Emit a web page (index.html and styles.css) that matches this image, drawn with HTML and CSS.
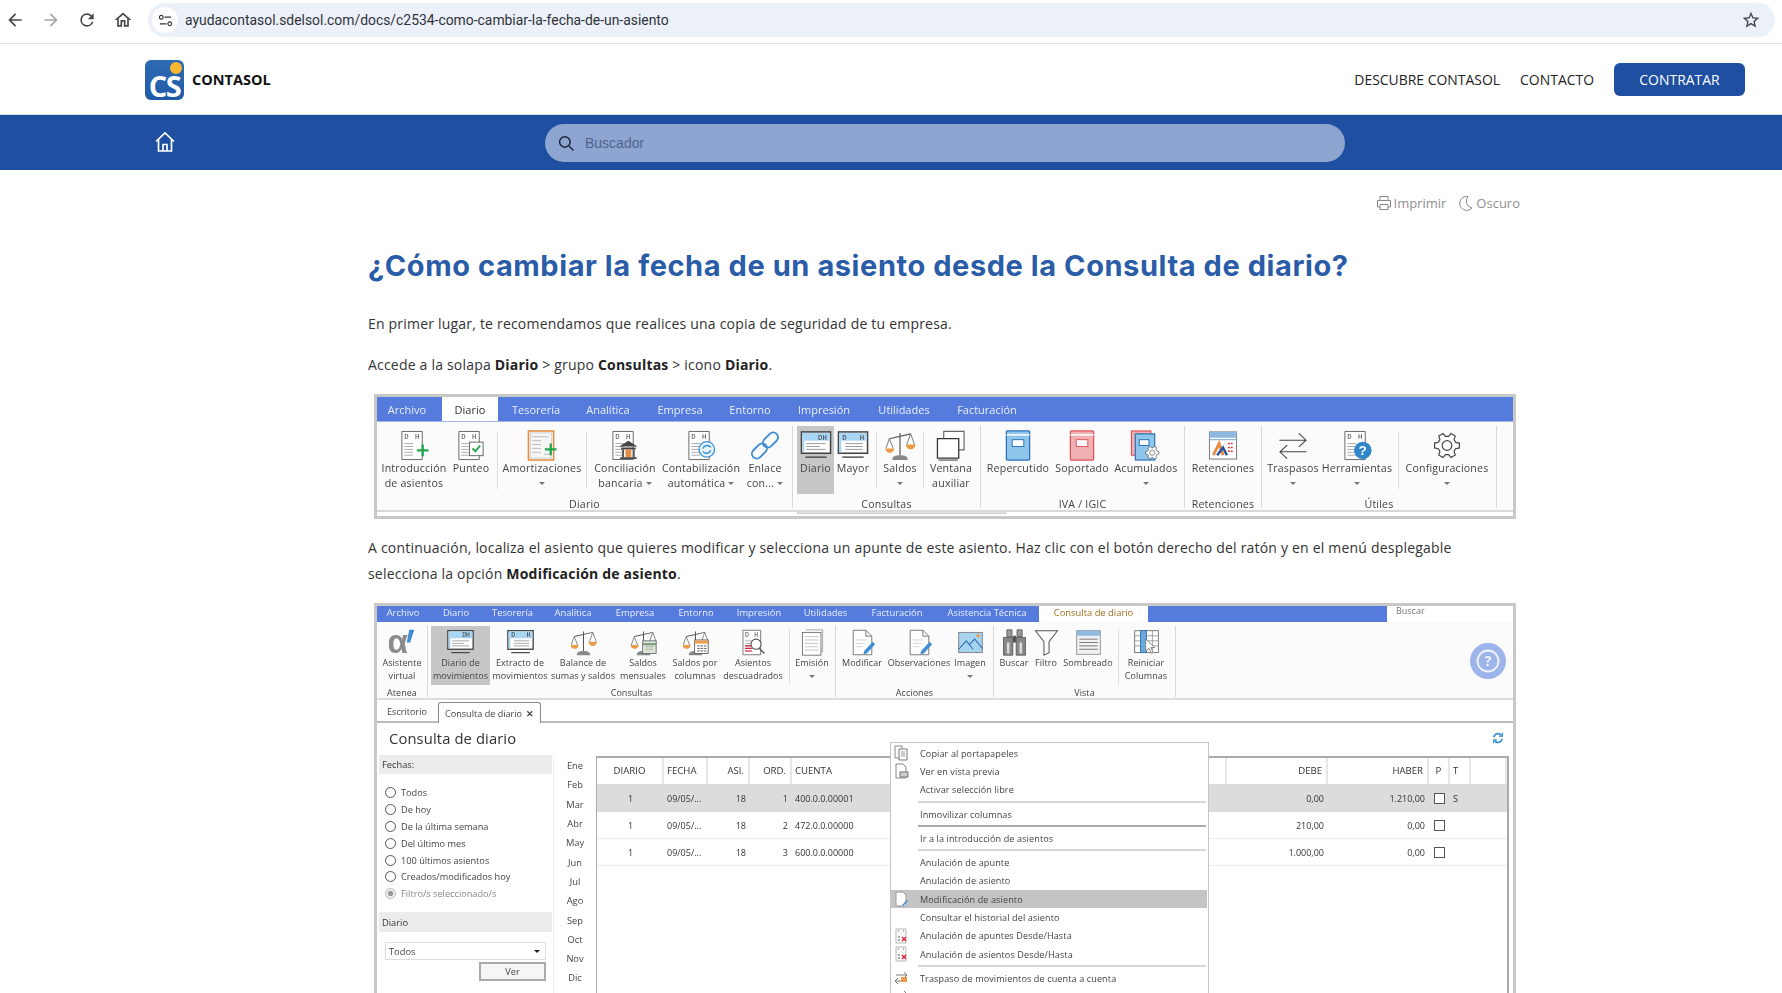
FILE: index.html
```html
<!DOCTYPE html>
<html lang="es">
<head>
<meta charset="utf-8">
<title>¿Cómo cambiar la fecha de un asiento?</title>
<link rel="stylesheet" href="styles.css">
</head>
<body>
<svg class="defs" aria-hidden="true">
  <symbol id="page-dh" viewBox="0 0 32 32">
    <path d="M3.500 1.500h21v29h-21z" fill="#fff" stroke="#666"/>
    <text x="6" y="9" font-size="7.500" font-family="Liberation Mono" fill="#444">D</text>
    <text x="17" y="9" font-size="7.500" font-family="Liberation Mono" fill="#444">H</text>
    <path d="M6 14h9M6 17h9M6 20h9M6 23h9M6 26h9" stroke="#aaa"/>
  </symbol>
  <symbol id="i-intro" viewBox="0 0 32 32"><use href="#page-dh"/><path d="M19 21h12M25 15v12" stroke="#20a84c" stroke-width="2.400"/></symbol>
  <symbol id="i-punteo" viewBox="0 0 32 32"><use href="#page-dh"/><rect x="14.500" y="12.500" width="14" height="14" fill="#fff" stroke="#666"/><path d="M17.500 19l3 3 5-6" fill="none" stroke="#20a84c" stroke-width="2"/></symbol>
  <symbol id="i-amort" viewBox="0 0 32 32"><rect x="2" y="1" width="26" height="30" fill="#fff" stroke="#e58c42" stroke-width="1.600"/><rect x="4" y="3" width="22" height="26" fill="#f6f6f6" stroke="#ccc"/><path d="M6 7h17M6 11h9M6 15h9M6 19h9M6 23h9M18 25h6" stroke="#bbb"/><path d="M19 20h12M25 14v12" stroke="#20a84c" stroke-width="2.400"/></symbol>
  <symbol id="i-bank" viewBox="0 0 32 32"><use href="#page-dh"/><path d="M19.500 11l9.500 6H10z" fill="#444"/><path d="M12 18h15v2H12zM11 28h17v2H11z" fill="#444"/><path d="M13 20h2v8h-2zM24 20h2v8h-2z" fill="#555"/><rect x="16.500" y="20" width="6" height="8" fill="#e58c42"/></symbol>
  <symbol id="i-contab" viewBox="0 0 32 32"><use href="#page-dh"/><circle cx="22" cy="20" r="8" fill="#e5f2fb" stroke="#3b93d6" stroke-width="1.400"/><path d="M18 19a4.500 4.500 0 0 1 8-1M26 21a4.500 4.500 0 0 1-8 1" fill="none" stroke="#3b93d6" stroke-width="1.600"/></symbol>
  <symbol id="i-link" viewBox="0 0 32 32"><g fill="none" stroke="#3f8ed4" stroke-width="2" transform="rotate(-45 16 16)"><rect x="-1" y="11" width="18" height="10" rx="5"/><rect x="15" y="11" width="18" height="10" rx="5"/></g></symbol>
  <symbol id="i-mond" viewBox="0 0 32 32"><rect x="1" y="2" width="30" height="22" fill="#fff" stroke="#444" stroke-width="1.600"/><rect x="2" y="3" width="28" height="8" fill="#a9d6f3"/><rect x="2" y="3" width="2" height="20" fill="#a9d6f3"/><text x="18" y="10" font-size="7.500" font-family="Liberation Mono" fill="#333">DH</text><path d="M6 14h20M6 17h14M6 20h20" stroke="#999"/><path d="M5 28h22" stroke="#444" stroke-width="1.400"/></symbol>
  <symbol id="i-monm" viewBox="0 0 32 32"><rect x="1" y="2" width="30" height="22" fill="#fff" stroke="#444" stroke-width="1.600"/><rect x="2" y="3" width="28" height="8" fill="#a9d6f3"/><rect x="2" y="3" width="2" height="20" fill="#a9d6f3"/><text x="5" y="10" font-size="7.500" font-family="Liberation Mono" fill="#333">D</text><text x="23" y="10" font-size="7.500" font-family="Liberation Mono" fill="#333">H</text><path d="M8 14h18M8 17h18M8 20h18" stroke="#999"/><path d="M5 28h22" stroke="#444" stroke-width="1.400"/></symbol>
  <symbol id="i-scale" viewBox="0 0 32 32"><path d="M16 3v23M5 9L27 4" stroke="#555" stroke-width="1.200" fill="none"/><path d="M5 9L1.500 19M5 9l4 10M27 4l-4 11M27 4l4 11" stroke="#777" fill="none"/><path d="M1 19h9a4.500 4.500 0 0 1-9 0zM22 15h10a5 5 0 0 1-10 0z" fill="#eb9a45"/><path d="M8 31c0-4 3-5 8-5s8 1 8 5z" fill="#888"/></symbol>
  <symbol id="i-scalecal" viewBox="0 0 32 32"><use href="#i-scale"/><rect x="15" y="14" width="16" height="15" fill="#dde7d6" stroke="#667"/><path d="M15 18h16" stroke="#7c9a74" stroke-width="2.500"/><path d="M19 21h9M19 24h9" stroke="#888" stroke-dasharray="2 1"/></symbol>
  <symbol id="i-scaletab" viewBox="0 0 32 32"><use href="#i-scale"/><rect x="15" y="13" width="16" height="16" fill="#fff" stroke="#555"/><path d="M15 15.500h16" stroke="#eb9a45" stroke-width="3.500"/><path d="M18 20h11M18 23h11M18 26h11" stroke="#444" stroke-dasharray="3 1"/></symbol>
  <symbol id="i-win" viewBox="0 0 32 32"><path d="M8.500 1.500h21v19h-21z" fill="#fff" stroke="#666" stroke-width="1.200"/><path d="M2 9h22v20H2z" fill="#fff" stroke="#333" stroke-width="1.300"/><path d="M3 31h20" stroke="#333"/></symbol>
  <symbol id="i-bookb" viewBox="0 0 32 32"><rect x="4" y="1" width="24" height="30" rx="1" fill="#8fc6ec" stroke="#2a6fb5" stroke-width="1.300"/><path d="M4 5h24" stroke="#fff" stroke-width="1.500"/><rect x="10" y="10" width="12" height="7" fill="#fff" stroke="#2a6fb5"/></symbol>
  <symbol id="i-bookr" viewBox="0 0 32 32"><rect x="4" y="1" width="24" height="30" rx="1" fill="#eeb0b0" stroke="#e0505a" stroke-width="1.300"/><path d="M4 5h24" stroke="#fff" stroke-width="1.500"/><rect x="10" y="10" width="12" height="7" fill="#fff" stroke="#e0505a"/></symbol>
  <symbol id="i-gear" viewBox="0 0 32 32"><polygon points="24.900,12.750 28.800,13.500 28.800,18.500 24.900,19.250 23.300,22.100 24.500,25.800 20.200,28.300 17.650,25.400 14.350,25.400 11.800,28.300 7.500,25.800 8.700,22.100 7.100,19.250 3.200,18.500 3.200,13.500 7.100,12.750 8.700,9.900 7.500,6.200 11.800,3.700 14.350,6.600 17.650,6.600 20.200,3.700 24.500,6.200 23.300,9.900" fill="#fff" stroke="#444" stroke-width="1.200"/><circle cx="16" cy="16" r="5" fill="#fff" stroke="#444" stroke-width="1.200"/></symbol>
  <symbol id="i-acum" viewBox="0 0 32 32"><rect x="1" y="1" width="20" height="25" fill="#eeb0b0" stroke="#e0505a" stroke-width="1.200"/><rect x="5" y="4" width="20" height="27" fill="#8fc6ec" stroke="#2a6fb5" stroke-width="1.200"/><rect x="9" y="10" width="10" height="6" fill="#fff" stroke="#2a6fb5"/><svg x="14" y="15" width="17" height="17" viewBox="0 0 32 32"><use href="#i-gear"/></svg></symbol>
  <symbol id="i-ret" viewBox="0 0 32 32"><rect x="2" y="2" width="28" height="28" fill="#fff" stroke="#777"/><rect x="2" y="2" width="28" height="6" fill="#8fb9e0"/><path d="M2 10h28" stroke="#6ea3d4"/><path d="M6 26l6-12 4 12" fill="none" stroke="#e58c42" stroke-width="3"/><path d="M10 26l6-8 4 8" fill="none" stroke="#24509d" stroke-width="2.500"/><path d="M21 14h6M21 18h6M21 22h6" stroke="#d33" stroke-dasharray="2 1" stroke-width="1.500"/></symbol>
  <symbol id="i-arrows" viewBox="0 0 32 32"><path d="M2 10.500h27M22 3.500l7.500 7-7.500 7M30 22.500H3M10 15.500l-7.500 7 7.500 7" fill="none" stroke="#444" stroke-width="1.100"/></symbol>
  <symbol id="i-help" viewBox="0 0 32 32"><use href="#page-dh"/><circle cx="22" cy="21" r="9" fill="#2f86c9"/><text x="22" y="26" font-size="14" font-weight="700" text-anchor="middle" font-family="Liberation Sans" fill="#fff">?</text></symbol>
  <symbol id="i-alpha" viewBox="0 0 32 32"><text x="-2" y="28" font-size="40" font-family="Liberation Sans" font-weight="700" fill="#8c8c8c">α</text><path d="M24 1h6l-5 15h-4z" fill="#3f8ed4"/></symbol>
  <symbol id="i-docsearch" viewBox="0 0 32 32"><use href="#page-dh"/><path d="M6 20h8M6 23h8M6 26h8" stroke="#d8203a" stroke-width="1.300"/><circle cx="19" cy="18" r="6" fill="#fff" stroke="#555" stroke-width="1.300"/><path d="M23 23l6 6" stroke="#555" stroke-width="1.600"/></symbol>
  <symbol id="i-stack" viewBox="0 0 32 32"><path d="M8 1h20v26h-2" fill="none" stroke="#999"/><rect x="4" y="4" width="22" height="27" fill="#fff" stroke="#666"/><path d="M7 9h16M7 13h16M7 17h16M7 21h16M7 25h16" stroke="#bbb"/></symbol>
  <symbol id="i-modif" viewBox="0 0 32 32"><path d="M5 1.500h15l7 7v22H5z" fill="#fff" stroke="#666"/><path d="M20 1.500v7h7" fill="none" stroke="#666"/><path d="M8 13h13M8 17h11M8 21h8" stroke="#ccc"/><path d="M28 15l3 3-10 11-4 1 1-4z" fill="#3f8ed4"/></symbol>
  <symbol id="i-img" viewBox="0 0 32 32"><rect x="2" y="4" width="28" height="24" fill="#a8d3ef" stroke="#777"/><path d="M2 24l9-10 8 10M15 18l6-6 9 11" fill="none" stroke="#2a6fb5" stroke-width="1.200"/><circle cx="25" cy="8" r="2" fill="#eb9a45"/></symbol>
  <symbol id="i-bino" viewBox="0 0 32 32"><path d="M7 1h6v8H7zM19 1h6v8h-6z" fill="#999" stroke="#555"/><path d="M3 10h11v21H3zM18 10h11v21H18z" fill="#888" stroke="#555"/><path d="M14 8h4v8h-4z" fill="#555"/><path d="M7 16h3v13H7zM22 16h3v13h-3z" fill="#ddd"/></symbol>
  <symbol id="i-funnel" viewBox="0 0 32 32"><path d="M3 2h26L19 15v13l-6 3V15z" fill="#fff" stroke="#555" stroke-width="1.200"/></symbol>
  <symbol id="i-shade" viewBox="0 0 32 32"><rect x="2" y="2" width="28" height="28" fill="#f2f2f2" stroke="#888"/><rect x="2" y="2" width="28" height="6" fill="#8fb9e0"/><path d="M5 12h22M5 16h22M5 20h22M5 24h22" stroke="#666"/></symbol>
  <symbol id="i-cols" viewBox="0 0 32 32"><rect x="2" y="2" width="28" height="26" fill="#fff" stroke="#666"/><path d="M2 8h28M2 14h28M2 20h28M9 2v26M23 2v26" stroke="#999"/><rect x="9" y="2" width="7" height="26" fill="#6aa9dd" stroke="#2a6fb5"/><path d="M15 12v14l4-3 3 6 2-1-3-6h5z" fill="#fff" stroke="#777"/></symbol>
  <symbol id="m-copy" viewBox="0 0 16 16"><path d="M2 1h7v12H2z" fill="#fff" stroke="#888"/><path d="M6 4h8v11H6z" fill="#fff" stroke="#777"/><path d="M8 7h4M8 9h4M8 11h4" stroke="#999"/></symbol>
  <symbol id="m-prev" viewBox="0 0 16 16"><path d="M3 1h7l3 3v11H3z" fill="#fff" stroke="#888"/><rect x="7" y="9" width="8" height="5" fill="#ccc" stroke="#777"/></symbol>
  <symbol id="m-mod" viewBox="0 0 16 16"><path d="M3 1h7l3 3v11H3z" fill="#fff" stroke="#999"/><path d="M14 9l1 1-5 5-1-1z" fill="#3f8ed4"/></symbol>
  <symbol id="m-x" viewBox="0 0 16 16"><path d="M3 1h10v14H3z" fill="#f6f6f6" stroke="#bbb"/><path d="M5 3h1M10 3h1M5 9h2M5 12h2" stroke="#666"/><path d="M9 9l4 4M13 9l-4 4" stroke="#d8203a" stroke-width="1.400"/></symbol>
  <symbol id="m-tras" viewBox="0 0 16 16"><path d="M3 5h11M11 2l3 3-3 3M13 11H2M5 8l-3 3 3 3" fill="none" stroke="#777"/><rect x="8" y="7" width="6" height="5" fill="#eb9a45"/></symbol>
</svg>

<div class="chrome">
  <svg class="cicon" viewBox="0 0 24 24"><path d="M20 11H7.830l5.590-5.590L12 4l-8 8 8 8 1.410-1.410L7.830 13H20v-2z"/></svg>
  <svg class="cicon dim" viewBox="0 0 24 24"><path d="M4 11h12.170l-5.590-5.590L12 4l8 8-8 8-1.410-1.410L16.170 13H4v-2z"/></svg>
  <svg class="cicon" viewBox="0 0 24 24"><path d="M17.650 6.350A7.960 7.960 0 0 0 12 4a8 8 0 1 0 7.750 10h-2.080A6 6 0 1 1 12 6c1.660 0 3.140.69 4.220 1.780L13 11h7V4l-2.350 2.350z"/></svg>
  <svg class="cicon" viewBox="0 0 24 24"><path d="M12 5.690l5 4.500V18h-2v-6H9v6H7v-7.810l5-4.500M12 3L2 12h3v8h6v-6h2v6h6v-8h3L12 3z"/></svg>
  <div class="urlbar">
    <span class="siteinfo"><svg viewBox="0 0 16 16"><path d="M7 4.500h7M2 11.500h7" stroke="#333" stroke-width="1.300"/><circle cx="3.500" cy="4.500" r="2" fill="none" stroke="#333" stroke-width="1.200"/><circle cx="12.500" cy="11.500" r="2" fill="none" stroke="#333" stroke-width="1.200"/></svg></span>
    <span class="url">ayudacontasol.sdelsol.com/docs/c2534-como-cambiar-la-fecha-de-un-asiento</span>
    <svg class="star" viewBox="0 0 24 24"><path d="M22 9.240l-7.190-.62L12 2 9.190 8.630 2 9.240l5.460 4.730L5.820 21 12 17.270 18.180 21l-1.630-7.030L22 9.240zM12 15.400l-3.760 2.270 1-4.280-3.320-2.880 4.380-.38L12 6.100l1.710 4.040 4.380.38-3.320 2.880 1 4.280L12 15.400z"/></svg>
  </div>
</div>

<header class="site-head">
  <div class="brand">
    <span class="logo"><span class="logo-dot"></span><span class="logo-cs">CS</span></span>
    <span class="brand-name">CONTASOL</span>
  </div>
  <nav class="nav">
    <a>DESCUBRE CONTASOL</a>
    <a>CONTACTO</a>
    <a class="btn">CONTRATAR</a>
  </nav>
</header>

<div class="band">
  <svg class="home" viewBox="0 0 24 24" fill="none" stroke="#fff" stroke-width="1.700"><path d="M3 11.500L12 3l9 8.500M5.500 9.500V21h13V9.500M10 21v-6.500h4V21"/></svg>
  <div class="search">
    <svg viewBox="0 0 24 24" fill="none" stroke="#1a2338" stroke-width="2"><circle cx="10.500" cy="10.500" r="7"/><path d="M16 16l6 6"/></svg>
    <span>Buscador</span>
  </div>
</div>

<main class="article">
  <div class="tools">
    <span class="tool"><svg viewBox="0 0 16 16" fill="none" stroke="#888"><path d="M4 5V1.500h8V5M4 12H1.500V5.500h13V12H12M4 9.500h8v5H4z"/></svg>Imprimir</span>
    <span class="tool"><svg viewBox="0 0 16 16" fill="none" stroke="#888"><path d="M10 1.500a7 7 0 1 0 4 11.500A7 7 0 0 1 10 1.500z"/></svg>Oscuro</span>
  </div>
  <h1>¿Cómo cambiar la fecha de un asiento desde la Consulta de diario?</h1>
  <p class="p1">En primer lugar, te recomendamos que realices una copia de seguridad de tu empresa.</p>
  <p class="p2">Accede a la solapa <b>Diario</b> &gt; grupo <b>Consultas</b> &gt; icono <b>Diario</b>.</p>

  <div class="shot shot-a">
    <div class="tabs tabs-a">
      <span class="tab w65">Archivo</span><span class="tab on w56">Diario</span><span class="tab w76">Tesorería</span><span class="tab w68">Analítica</span><span class="tab w76">Empresa</span><span class="tab w64">Entorno</span><span class="tab w84">Impresión</span><span class="tab w76">Utilidades</span><span class="tab w90">Facturación</span>
    </div>
    <div class="ribbon ribbon-a">
      <div class="group">
        <div class="items">
          <div class="item w68"><svg class="ic"><use href="#i-intro"/></svg><span>Introducción<br>de asientos</span></div>
          <div class="item w46"><svg class="ic"><use href="#i-punteo"/></svg><span>Punteo</span></div>
          <i class="isep s3"></i>
          <div class="item w88"><svg class="ic"><use href="#i-amort"/></svg><span>Amortizaciones<br><i class="caret"></i></span></div>
          <i class="isep"></i>
          <div class="item w76"><svg class="ic"><use href="#i-bank"/></svg><span>Conciliación<br>bancaria <i class="caret"></i></span></div>
          <div class="item w76"><svg class="ic"><use href="#i-contab"/></svg><span>Contabilización<br>automática <i class="caret"></i></span></div>
          <div class="item w52"><svg class="ic"><use href="#i-link"/></svg><span>Enlace<br>con... <i class="caret"></i></span></div>
        </div>
        <div class="glabel">Diario</div>
      </div>
      <div class="group">
        <div class="items pl4">
          <div class="item w37 sel"><svg class="ic"><use href="#i-mond"/></svg><span>Diario</span></div>
          <div class="item w38"><svg class="ic"><use href="#i-monm"/></svg><span>Mayor</span></div>
          <i class="isep s4"></i>
          <div class="item w46"><svg class="ic"><use href="#i-scale"/></svg><span>Saldos<br><i class="caret"></i></span></div>
          <i class="isep"></i>
          <div class="item w52 ml1"><svg class="ic"><use href="#i-win"/></svg><span>Ventana<br>auxiliar</span></div>
          <i class="spacer"></i>
        </div>
        <div class="glabel">Consultas</div>
      </div>
      <div class="group">
        <div class="items pl5">
          <div class="item w64"><svg class="ic"><use href="#i-bookb"/></svg><span>Repercutido</span></div>
          <div class="item w64"><svg class="ic"><use href="#i-bookr"/></svg><span>Soportado</span></div>
          <div class="item w64"><svg class="ic"><use href="#i-acum"/></svg><span>Acumulados<br><i class="caret"></i></span></div>
          <i class="spacer"></i>
        </div>
        <div class="glabel">IVA / IGIC</div>
      </div>
      <div class="group">
        <div class="items">
          <div class="item w76"><svg class="ic"><use href="#i-ret"/></svg><span>Retenciones</span></div>
        </div>
        <div class="glabel">Retenciones</div>
      </div>
      <div class="group">
        <div class="items">
          <div class="item w62"><svg class="ic"><use href="#i-arrows"/></svg><span>Traspasos<br><i class="caret"></i></span></div>
          <div class="item w66"><svg class="ic"><use href="#i-help"/></svg><span>Herramientas<br><i class="caret"></i></span></div>
          <i class="isep s8"></i>
          <div class="item w96"><svg class="ic"><use href="#i-gear"/></svg><span>Configuraciones<br><i class="caret"></i></span></div>
        </div>
        <div class="glabel">Útiles</div>
      </div>
    </div>
    <div class="ribbon-foot"><span class="foot-piece"></span></div>
  </div>

  <p class="p3">A continuación, localiza el asiento que quieres modificar y selecciona un apunte de este asiento. Haz clic con el botón derecho del ratón y en el menú desplegable selecciona la opción <b>Modificación de asiento</b>.</p>

  <div class="shot shot-b">
    <div class="tabs tabs-b">
      <span class="tab w52">Archivo</span><span class="tab w54">Diario</span><span class="tab w59">Tesorería</span><span class="tab w62">Analítica</span><span class="tab w62">Empresa</span><span class="tab w60">Entorno</span><span class="tab w66">Impresión</span><span class="tab w67">Utilidades</span><span class="tab w76">Facturación</span><span class="tab w104">Asistencia Técnica</span><span class="tab on w109">Consulta de diario</span>
      <span class="tabfill"></span>
      <span class="qsearch">Buscar</span>
    </div>
    <div class="ribbon ribbon-b">
      <div class="group">
        <div class="items">
          <div class="item w50"><svg class="ic"><use href="#i-alpha"/></svg><span>Asistente<br>virtual</span></div>
        </div>
        <div class="glabel">Atenea</div>
      </div>
      <div class="group">
        <div class="items pl3">
          <div class="item w59 sel"><svg class="ic"><use href="#i-mond"/></svg><span>Diario de<br>movimientos</span></div>
          <div class="item w60"><svg class="ic"><use href="#i-monm"/></svg><span>Extracto de<br>movimientos</span></div>
          <div class="item w66"><svg class="ic"><use href="#i-scale"/></svg><span>Balance de<br>sumas y saldos</span></div>
          <div class="item w54"><svg class="ic"><use href="#i-scalecal"/></svg><span>Saldos<br>mensuales</span></div>
          <div class="item w50"><svg class="ic"><use href="#i-scaletab"/></svg><span>Saldos por<br>columnas</span></div>
          <div class="item w66"><svg class="ic"><use href="#i-docsearch"/></svg><span>Asientos<br>descuadrados</span></div>
          <i class="isep s3"></i>
          <div class="item w44"><svg class="ic"><use href="#i-stack"/></svg><span>Emisión<br><i class="caret"></i></span></div>
        </div>
        <div class="glabel">Consultas</div>
      </div>
      <div class="group">
        <div class="items">
          <div class="item w52"><svg class="ic"><use href="#i-modif"/></svg><span>Modificar</span></div>
          <div class="item w62"><svg class="ic"><use href="#i-modif"/></svg><span>Observaciones</span></div>
          <div class="item w40"><svg class="ic"><use href="#i-img"/></svg><span>Imagen<br><i class="caret"></i></span></div>
          <i class="spacer"></i>
        </div>
        <div class="glabel">Acciones</div>
      </div>
      <div class="group">
        <div class="items">
          <div class="item w40"><svg class="ic"><use href="#i-bino"/></svg><span>Buscar</span></div>
          <div class="item w24"><svg class="ic"><use href="#i-funnel"/></svg><span>Filtro</span></div>
          <div class="item w60"><svg class="ic"><use href="#i-shade"/></svg><span>Sombreado</span></div>
          <i class="isep"></i>
          <div class="item w54"><svg class="ic"><use href="#i-cols"/></svg><span>Reiniciar<br>Columnas</span></div>
        </div>
        <div class="glabel">Vista</div>
      </div>
      <div class="helpwrap">
        <svg class="helpdot" viewBox="0 0 36 36"><circle cx="18" cy="18" r="18" fill="#9db5ea"/><circle cx="18" cy="18" r="10.500" fill="none" stroke="#f2f5fd" stroke-width="1.800"/><text x="18" y="23" font-size="14" font-weight="700" text-anchor="middle" font-family="Open Sans" fill="#f2f5fd">?</text></svg>
      </div>
    </div>
    <div class="doctabs">
      <span class="doctab">Escritorio</span>
      <span class="doctab active">Consulta de diario <b class="close">✕</b></span>
    </div>
    <div class="titlerow">
      <span class="apptitle">Consulta de diario</span>
      <svg class="refresh" viewBox="0 0 16 16" fill="none" stroke="#2f8fd6" stroke-width="2.200"><path d="M2.500 7a5.500 5.500 0 0 1 10-2.500M13.500 9a5.500 5.500 0 0 1-10 2.500"/><path d="M13.800 1v4.500H9.300M2.200 15v-4.500h4.500" stroke-width="1.500"/></svg>
    </div>
    <div class="workspace">
      <aside class="filters">
        <div class="fband">Fechas:</div>
        <div class="radios">
          <label class="radio"><i></i>Todos</label>
          <label class="radio"><i></i>De hoy</label>
          <label class="radio"><i></i>De la última semana</label>
          <label class="radio"><i></i>Del último mes</label>
          <label class="radio"><i></i>100 últimos asientos</label>
          <label class="radio"><i></i>Creados/modificados hoy</label>
          <label class="radio off"><i></i>Filtro/s seleccionado/s</label>
        </div>
        <div class="fband tall">Diario</div>
        <div class="select"><span>Todos</span><i class="caret dark"></i></div>
        <div class="verwrap"><span class="ver">Ver</span></div>
      </aside>
      <div class="months">
        <span>Ene</span><span>Feb</span><span>Mar</span><span>Abr</span><span>May</span><span>Jun</span><span>Jul</span><span>Ago</span><span>Sep</span><span>Oct</span><span>Nov</span><span>Dic</span>
      </div>
      <div class="grid">
        <div class="row head">
          <span class="c">DIARIO</span><span class="l">FECHA</span><span class="r">ASI.</span><span class="r">ORD.</span><span class="l">CUENTA</span><span class="r">DEBE</span><span class="r">HABER</span><span class="c">P</span><span class="l">T</span><span></span>
        </div>
        <div class="row hl">
          <span class="c">1</span><span class="l">09/05/...</span><span class="r">18</span><span class="r">1</span><span class="l">400.0.0.00001</span><span class="r">0,00</span><span class="r">1.210,00</span><span class="c"><i class="chk"></i></span><span class="l">S</span><span></span>
        </div>
        <div class="row">
          <span class="c">1</span><span class="l">09/05/...</span><span class="r">18</span><span class="r">2</span><span class="l">472.0.0.00000</span><span class="r">210,00</span><span class="r">0,00</span><span class="c"><i class="chk"></i></span><span></span><span></span>
        </div>
        <div class="row">
          <span class="c">1</span><span class="l">09/05/...</span><span class="r">18</span><span class="r">3</span><span class="l">600.0.0.00000</span><span class="r">1.000,00</span><span class="r">0,00</span><span class="c"><i class="chk"></i></span><span></span><span></span>
        </div>
      </div>
    </div>
    <div class="menu">
      <div class="mi"><svg class="mic"><use href="#m-copy"/></svg>Copiar al portapapeles</div>
      <div class="mi"><svg class="mic"><use href="#m-prev"/></svg>Ver en vista previa</div>
      <div class="mi">Activar selección libre</div>
      <div class="msep"></div>
      <div class="mi">Inmovilizar columnas</div>
      <div class="msep dark"></div>
      <div class="mi">Ir a la introducción de asientos</div>
      <div class="msep"></div>
      <div class="mi">Anulación de apunte</div>
      <div class="mi">Anulación de asiento</div>
      <div class="mi hover"><svg class="mic"><use href="#m-mod"/></svg>Modificación de asiento</div>
      <div class="mi">Consultar el historial del asiento</div>
      <div class="mi"><svg class="mic"><use href="#m-x"/></svg>Anulación de apuntes Desde/Hasta</div>
      <div class="mi"><svg class="mic"><use href="#m-x"/></svg>Anulación de asientos Desde/Hasta</div>
      <div class="msep"></div>
      <div class="mi"><svg class="mic"><use href="#m-tras"/></svg>Traspaso de movimientos de cuenta a cuenta</div>
      <div class="mi"><svg class="mic"><use href="#m-tras"/></svg></div>
    </div>
  </div>
</main>
</body>
</html>
```
FILE: styles.css
```css
* { box-sizing: border-box; }
html, body { margin: 0; padding: 0; height: 993px; overflow: hidden; background: #fff; }
body { font-family: "Open Sans", "Liberation Sans", sans-serif; color: #333; }
.defs { display: none; }

/* browser chrome */
.chrome { height: 44px; border-bottom: 1px solid #e3e3e3; display: flex; align-items: center; padding: 0 7px 3px 3px; background: #fff; }
.cicon { width: 20px; height: 20px; fill: #474747; flex: none; margin-right: 14px; margin-left: 2px; }
.cicon.dim { fill: #a5a5a5; }
.urlbar { flex: 1; height: 34px; margin-left: 1px; border-radius: 17px; background: #ebf0f9; display: flex; align-items: center; padding: 0 14px 0 4px; }
.siteinfo { width: 26px; height: 26px; border-radius: 50%; background: #fff; display: flex; align-items: center; justify-content: center; }
.siteinfo svg { width: 15px; height: 15px; }
.url { margin-left: 7px; font: 13.9px "Roboto", "Liberation Sans", sans-serif; color: #30343a; flex: 1; }
.star { width: 20px; height: 20px; fill: #444; }

/* header */
.site-head { height: 71px; border-bottom: 1px solid #ddd; display: flex; align-items: center; justify-content: space-between; padding: 0 37px 0 145px; }
.brand { display: flex; align-items: center; gap: 8px; }
.logo { width: 39px; height: 40px; margin-top: 1px; border-radius: 6px; background: linear-gradient(180deg, #2e6bb3, #1f5aa6); position: relative; display: flex; align-items: flex-end; justify-content: center; }
.logo-dot { position: absolute; top: 2px; right: 2px; width: 12px; height: 12px; border-radius: 50%; background: #f7b733; }
.logo-cs { font: 700 29px/28px "Open Sans", sans-serif; color: #fff; letter-spacing: -1.500px; }
.brand-name { font: 700 14.5px "Open Sans", sans-serif; color: #111; }
.nav { display: flex; align-items: center; gap: 20px; }
.nav a { font-size: 13.95px; color: #222; }
.nav a.btn { width: 131px; height: 33px; border-radius: 6px; background: #1e4fa1; color: #fff; display: flex; align-items: center; justify-content: center; }

/* blue band */
.band { height: 55px; background: #1e4fa1; display: flex; align-items: center; padding-left: 153px; }
.home { width: 24px; height: 24px; flex: none; margin-bottom: 2px; }
.search { margin-left: 368px; width: 800px; height: 38px; border-radius: 19px; background: #8da5d0; display: flex; align-items: center; padding-left: 12px; gap: 10px; }
.search svg { width: 18px; height: 18px; }
.search span { font: 14px "Liberation Sans", sans-serif; color: #4e648e; }

/* article */
.article { width: 1152px; margin-left: 368px; }
.tools { display: flex; justify-content: flex-end; gap: 12px; height: 33px; align-items: center; margin-top: 16px; }
.tool { display: flex; align-items: center; gap: 2px; font-size: 13px; color: #8f8f8f; }
.tool svg { width: 16px; height: 16px; }
h1 { margin: 22px 0 0; height: 50px; font: 700 29px/50px "Inter", "Open Sans", sans-serif; color: #2a5ca8; letter-spacing: .57px; white-space: nowrap; }
p { margin: 0; font-size: 14px; line-height: 26px; color: #333; letter-spacing: .2px; }
.p1 { margin-top: 20px; }
.p2 { margin-top: 15px; }
.p3 { margin-top: 16px; }
p b { color: #222; font-weight: 700; }

/* embedded app screenshots */
.shot { width: 1142px; margin-left: 6px; border: 3px solid #c8c8c8; background: #fff; filter: blur(.35px); font-family: "Open Sans", "Noto Sans", sans-serif; color: #444; position: relative; }
.shot-a { margin-top: 16px; height: 125px; }
.shot-b { margin-top: 16px; height: 420px; }
.tabs { display: flex; background: #557bdc; color: #e8eefc; align-items: stretch; }
.tabs .tab { display: flex; align-items: center; justify-content: center; flex: none; }
.tabs .tab.on { background: #fff; color: #333; }
.tabs-a { height: 25px; font-size: 11px; border-bottom: 1px solid #9fb4ea; }
.tabs-a .tab:first-child { padding-right: 5px; }
.tabs-b { height: 16px; font-size: 9.4px; }
.tabs-b .tab { padding-bottom: 4px; }
.tabs-b .tab.on { color: #a0701f; }
.tabfill { flex: 1; }
.qsearch { width: 126px; background: #fff; color: #777; font-size: 9px; padding-left: 9px; line-height: 10px; }

.ribbon { display: flex; background: #fbfbfb; align-items: flex-start; }
.group { border-right: 1px solid #d8d8d8; flex: none; }
.items { display: flex; align-items: stretch; }
.item { flex: none; display: flex; flex-direction: column; align-items: center; text-align: center; white-space: nowrap; }
.item.sel { background: #c6c6c6; }
.ic { display: block; flex: none; }
.isep { display: block; width: 1px; background: #dcdcdc; flex: none; }
.spacer { flex: 1; }
.caret { display: inline-block; width: 0; height: 0; border: 3px solid transparent; border-top: 3.5px solid #777; border-bottom: 0; vertical-align: middle; }
.caret.dark { border-top-color: #222; }
.glabel { text-align: center; white-space: nowrap; }

.ribbon-a { height: 90px; padding-top: 4px; font-size: 10.6px; border-bottom: 2px solid #d8d8d8; letter-spacing: .2px; }
.ribbon-a .group { height: 82px; }
.ribbon-a .items { height: 68px; }
.ribbon-a .item { padding-top: 4px; line-height: 14.5px; }
.ribbon-a .ic { width: 32px; height: 31px; }
.ribbon-a .isep { margin: 6px 0 5px; }
.ribbon-a .glabel { box-sizing: content-box; height: 14px; padding-top: 3px; line-height: 14px; }
.ribbon-a .group:nth-child(1) { width: 416px; }
.ribbon-a .group:nth-child(2) { width: 188px; }
.ribbon-a .group:nth-child(3) { width: 204px; }
.ribbon-a .group:nth-child(4) { width: 77px; }
.ribbon-a .group:nth-child(5) { width: 235px; }
.ribbon-a .group:nth-child(1) .items { padding-left: 3px; }
.ribbon-foot { height: 5px; }
.foot-piece { display: block; margin-left: 420px; width: 209px; height: 2px; background: #e2e2e2; border: 1px solid #ccc; border-top: 0; }

.ribbon-b { height: 78px; padding-top: 4px; font-size: 9px; letter-spacing: .05px; border-bottom: 2px solid #dcdcdc; position: relative; }
.ribbon-b .group { height: 71px; }
.ribbon-b .items { height: 59px; }
.ribbon-b .item { padding-top: 3px; line-height: 13px; }
.ribbon-b .ic { width: 27px; height: 27px; }
.ribbon-b .isep { margin: 3px 0 0; }
.ribbon-b .glabel { height: 12px; line-height: 16px; }
.ribbon-b .group:nth-child(1) { width: 51px; }
.ribbon-b .group:nth-child(2) { width: 408px; }
.ribbon-b .group:nth-child(3) { width: 158px; }
.ribbon-b .group:nth-child(4) { width: 182px; }
.helpwrap { flex: 1; display: flex; justify-content: flex-end; padding: 17px 7px 0 0; }
.helpdot { width: 36px; height: 36px; }

.pl3 { padding-left: 3px; }
.pl4 { padding-left: 4px; }
.pl5 { padding-left: 5px; }
.ml1 { margin-left: 1px; }
.s3 { margin-left: 3px !important; }
.s4 { margin-left: 4px !important; }
.s8 { margin-left: 8px !important; }
.w24 { width: 24px; } .w37 { width: 37px; } .w38 { width: 38px; } .w40 { width: 40px; } .w44 { width: 44px; }
.w46 { width: 46px; } .w50 { width: 50px; } .w52 { width: 52px; } .w54 { width: 54px; } .w56 { width: 56px; }
.w59 { width: 59px; } .w60 { width: 60px; } .w62 { width: 62px; } .w64 { width: 64px; } .w65 { width: 65px; }
.w66 { width: 66px; } .w67 { width: 67px; } .w68 { width: 68px; } .w76 { width: 76px; } .w84 { width: 84px; }
.w88 { width: 88px; } .w90 { width: 90px; } .w96 { width: 96px; } .w104 { width: 104px; } .w109 { width: 109px; }

.doctabs { height: 23px; display: flex; align-items: flex-end; border-bottom: 2px solid #bbb; font-size: 9.1px; color: #444; }
.doctab { height: 19px; padding: 0 10px; display: flex; align-items: center; }
.doctab:first-child { width: 61px; padding: 0 0 0 10px; }
.doctab.active { width: 103px; height: 21px; margin-bottom: -2px; background: #fff; border: 1px solid #888; border-bottom: 0; border-radius: 3px 3px 0 0; padding: 0 6px; white-space: nowrap; }
.close { font-size: 8.5px; margin-left: 4px; font-weight: 700; }

.titlerow { height: 32px; display: flex; align-items: center; justify-content: space-between; padding: 0 9px 3px 12px; }
.apptitle { font-size: 14.8px; color: #333; letter-spacing: .1px; }
.refresh { width: 12px; height: 12px; }

.workspace { display: flex; padding-left: 2px; font-size: 9.3px; }
.filters { width: 175px; flex: none; height: 240px; border-right: 1px solid #eee; }
.fband { height: 19px; background: #ececec; padding: 1px 0 0 3px; line-height: 18px; color: #333; margin-right: 1px; }
.fband.tall { height: 20px; line-height: 19px; margin-top: 10px; }
.radios { padding: 10px 0 0 6px; }
.radio { display: flex; align-items: center; gap: 5px; height: 16.900px; font-size: 9.2px; color: #444; }
.radio i { width: 11px; height: 11px; border-radius: 50%; border: 1px solid #555; background: #fff; flex: none; }
.radio.off { color: #888; }
.radio.off i { border-color: #bbb; background: radial-gradient(circle, #999 0 2.500px, #eee 3px); }
.select { margin: 10px 0 0 6px; width: 161px; height: 18px; border: 1px solid #ddd; display: flex; align-items: center; justify-content: space-between; padding: 0 5px 0 3px; }
.verwrap { display: flex; justify-content: flex-end; width: 167px; margin-top: 2px; }
.ver { width: 67px; height: 19px; border: 2px solid #aaa; background: #f6f6f6; text-align: center; line-height: 15px; }
.months { width: 42px; flex: none; display: grid; grid-auto-rows: 19.300px; justify-items: center; align-items: center; padding-top: 1px; align-content: start; color: #444; height: 240px; }
.grid { width: 913px; flex: none; height: 240px; margin-top: 1px; border: 2px solid #aaa; border-left-width: 1px; border-bottom: 0; font-size: 9px; }
.row { display: grid; grid-template-columns: 67px 44px 42px 42px 435px 101px 101px 21px 21px 36px; height: 27px; align-items: center; border-bottom: 1px solid #eee; color: #333; }
.row.head { height: 26px; border-bottom: 0; align-items: stretch; font-size: 9.6px; }
.row.head span { border-right: 2px solid #e6e6e6; display: flex; align-items: center; padding-bottom: 1px; }
.row.head .c { justify-content: center; }
.row.head .r { justify-content: flex-end; }
.row.hl { height: 28px; background: #dcdcdc; border-bottom: 0; }
.row .c { text-align: center; }
.row .l { padding-left: 3px; }
.row .r { padding-right: 4px; text-align: right; }
.chk { display: block; width: 11px; height: 11px; margin: 0 auto; border: 1px solid #555; background: #fff; }

.menu { position: absolute; left: 513px; top: 136px; width: 319px; height: 300px; background: #fff; border: 1px solid #c4c4c4; border-bottom: 0; padding-top: 1px; font-size: 9.1px; letter-spacing: .1px; color: #444; }
.mi { height: 18.300px; padding-left: 29px; display: flex; align-items: center; position: relative; margin-right: 1px; }
.mi.hover { background: #c4c4c4; }
.mic { position: absolute; left: 2px; top: 1px; width: 16px; height: 16px; }
.msep { height: 6px; padding-top: 2px; margin: 0 2px 0 27px; }
.msep::after { content: ""; display: block; width: 100%; height: 2px; background: #d5d5d5; }
.msep.dark::after { background: #aaa; }
```
